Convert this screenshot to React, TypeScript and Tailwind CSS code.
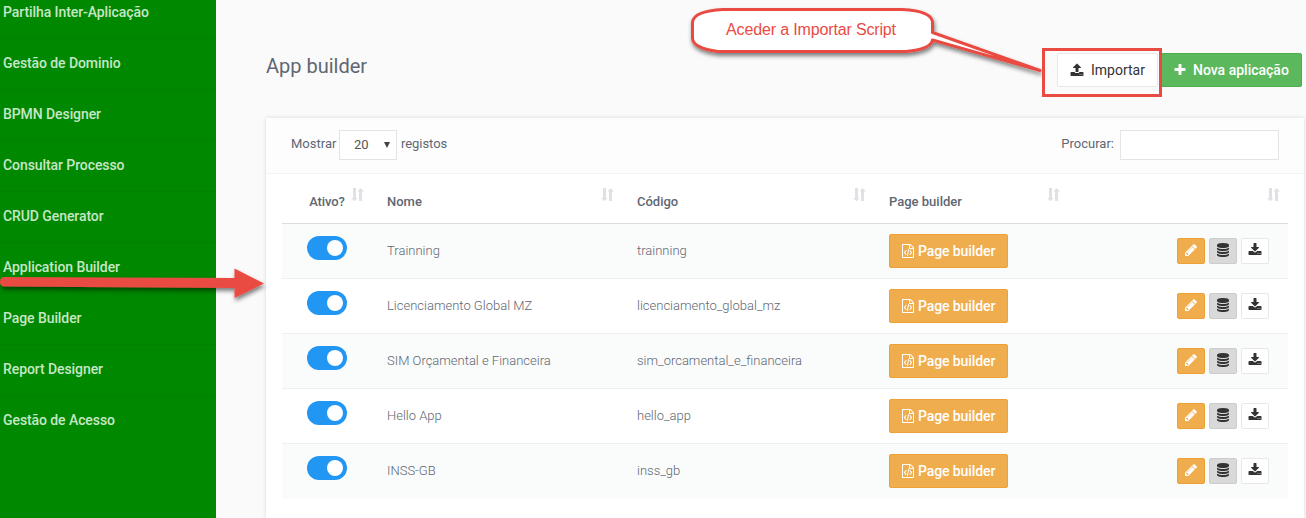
import React from "react";

const ICONS = {
  plus: "M1600 736v192q0 40-28 68t-68 28h-416v416q0 40-28 68t-68 28h-192q-40 0-68-28t-28-68v-416h-416q-40 0-68-28t-28-68v-192q0-40 28-68t68-28h416v-416q0-40 28-68t68-28h192q40 0 68 28t28 68v416h416q40 0 68 28t28 68z",
  pencil:
    "M491 1536l91-91-235-235-91 91v107h128v128h107zm523-928q0-22-22-22-10 0-17 7l-542 542q-7 7-7 17 0 22 22 22 10 0 17-7l542-542q7-7 7-17zm-54-192l416 416-832 832h-416v-416zm683 96q0 53-37 90l-166 166-416-416 166-165q36-38 90-38 53 0 91 38l235 234q37 39 37 91z",
  download:
    "M1344 1344q0-26-19-45t-45-19-45 19-19 45 19 45 45 19 45-19 19-45zm256 0q0-26-19-45t-45-19-45 19-19 45 19 45 45 19 45-19 19-45zm128-224v320q0 40-28 68t-68 28h-1472q-40 0-68-28t-28-68v-320q0-40 28-68t68-28h465l135 136q58 56 136 56t136-56l136-136h464q40 0 68 28t28 68zm-325-569q17 41-14 70l-448 448q-18 19-45 19t-45-19l-448-448q-31-29-14-70 17-39 59-39h256v-448q0-26 19-45t45-19h256q26 0 45 19t19 45v448h256q42 0 59 39z",
  upload:
    "M1344 1472q0-26-19-45t-45-19-45 19-19 45 19 45 45 19 45-19 19-45zm256 0q0-26-19-45t-45-19-45 19-19 45 19 45 45 19 45-19 19-45zm128-224v320q0 40-28 68t-68 28h-1472q-40 0-68-28t-28-68v-320q0-40 28-68t68-28h427q21 56 70.5 92t110.5 36h256q61 0 110.5-36t70.5-92h427q40 0 68 28t28 68zm-325-648q-17 40-59 40h-256v448q0 26-19 45t-45 19h-256q-26 0-45-19t-19-45v-448h-256q-42 0-59-40-17-39 14-69l448-448q18-19 45-19t45 19l448 448q31 30 14 69z",
  database:
    "M896 768q237 0 443-43t325-127v170q0 69-103 128t-280 93.5-385 34.5-385-34.5-280-93.5-103-128v-170q119 84 325 127t443 43zm0 768q237 0 443-43t325-127v170q0 69-103 128t-280 93.5-385 34.5-385-34.5-280-93.5-103-128v-170q119 84 325 127t443 43zm0-384q237 0 443-43t325-127v170q0 69-103 128t-280 93.5-385 34.5-385-34.5-280-93.5-103-128v-170q119 84 325 127t443 43zm0-1152q208 0 385 34.5t280 93.5 103 128v128q0 69-103 128t-280 93.5-385 34.5-385-34.5-280-93.5-103-128v-128q0-69 103-128t280-93.5 385-34.5z",
  fileCode:
    "M1596 380q28 28 48 76t20 88v1152q0 40-28 68t-68 28h-1344q-40 0-68-28t-28-68v-1600q0-40 28-68t68-28h896q40 0 88 20t76 48zm-444-244v376h376q-10-29-22-41l-313-313q-12-12-41-22zm384 1528v-1024h-416q-40 0-68-28t-28-68v-416h-768v1536h1280zm-928-896q8-11 21-12.5t24 6.5l51 38q11 8 12.5 21t-6.5 24l-182 243 182 243q8 11 6.5 24t-12.5 21l-51 38q-11 8-24 6.5t-21-12.5l-226-301q-14-19 0-38zm802 301q14 19 0 38l-226 301q-8 11-21 12.5t-24-6.5l-51-38q-11-8-12.5-21t6.5-24l182-243-182-243q-8-11-6.5-24t12.5-21l51-38q11-8 24-6.5t21 12.5zm-620 461q-13-2-20.5-13t-5.5-24l138-831q2-13 13-20.5t24-5.5l63 10q13 2 20.5 13t5.5 24l-138 831q-2 13-13 20.5t-24 5.5z",
};

function Icon({ name, className = "" }: { name: keyof typeof ICONS; className?: string }) {
  return (
    <svg viewBox="0 0 1792 1792" className={`size-3.5 shrink-0 fill-current ${className}`} aria-hidden="true">
      <path d={ICONS[name]} />
    </svg>
  );
}

function SortIcon() {
  return (
    <svg viewBox="0 0 13 14" className="absolute top-3.5 right-2 h-3.5 w-[13px] fill-[#e0e1e5]" aria-hidden="true">
      <path d="M2 0h3v10h1.500l-3 3.300L0 10h2zM8 13h3v-9.500h2L9.500 0 6.500 3.500H8z" />
    </svg>
  );
}

const menu = [
  "Partilha Inter-Aplicação",
  "Gestão de Dominio",
  "BPMN Designer",
  "Consultar Processo",
  "CRUD Generator",
  "Application Builder",
  "Page Builder",
  "Report Designer",
  "Gestão de Acesso",
];

const rows = [
  ["Trainning", "trainning"],
  ["Licenciamento Global MZ", "licenciamento_global_mz"],
  ["SIM Orçamental e Financeira", "sim_orcamental_e_financeira"],
  ["Hello App", "hello_app"],
  ["INSS-GB", "inss_gb"],
];

const headers = ["Ativo?", "Nome", "Código", "Page builder", ""];

function Sidebar() {
  return (
    <nav className="h-full w-[216px] shrink-0 overflow-hidden bg-[#008800] text-sm leading-[25px] font-medium tracking-[-0.08px] text-[#c6e7c6]">
      {menu.map((item, i) => (
        <div
          key={item}
          className={`border-b pl-[3px] ${i === 0 ? "h-[39px]" : "h-[51px] pt-3"} ${i === menu.length - 1 ? "border-transparent" : "border-[#008200]"}`}
        >
          {item}
        </div>
      ))}
    </nav>
  );
}

function Annotations() {
  return (
    <>
      <svg className="pointer-events-none absolute inset-0 h-[518px] w-[1306px]" aria-hidden="true">
        <defs>
          <filter id="shadow" x="-20%" y="-50%" width="140%" height="220%">
            <feDropShadow dx="1" dy="3" stdDeviation="2" floodColor="#000" floodOpacity="0.5" />
          </filter>
        </defs>
        <path
          d="M4 277L234.500 278V268.500L264 283.500L234.500 298V288L4 286.500Q0 286 0 282Q0 277 4 277Z"
          fill="#e94b43"
          filter="url(#shadow)"
        />
        <path
          d="M723 9.500H902Q932.500 11 932.500 23V32.500L1040 70.500L932.500 40Q931 49 906 51.500H718Q692.500 48 692.500 38V22Q694 11 723 9.500Z"
          fill="#fff"
          stroke="#e94b43"
          strokeWidth="3"
          strokeLinejoin="round"
          filter="url(#shadow)"
        />
        <rect x="1043.500" y="49.500" width="117" height="46" fill="none" stroke="#e94b43" strokeWidth="3" />
      </svg>
      <div className="absolute top-[18px] left-[691px] w-[240px] text-center font-['Liberation_Sans',sans-serif] text-base leading-6 tracking-[-0.15px] text-[#e94b43]">
        Aceder a Importar Script
      </div>
    </>
  );
}

export default function App() {
  return (
    <div className="relative flex h-[518px] w-[1306px] overflow-hidden bg-[#fafafa] font-[Roboto,sans-serif] text-[13px] text-[#5e6773]">
      <Sidebar />
      <main className="flex min-w-0 flex-1 flex-col pl-[50px]">
        <header className="flex h-[118px] shrink-0 items-start justify-between pt-[53px] pr-1">
          <h1 className="pt-px text-xl leading-6">App builder</h1>
          <div className="flex gap-[3px] text-sm">
            <button className="flex h-[34px] w-[101px] items-center gap-[7px] rounded-[2px] border border-[#e8e8e8] bg-white pb-px pl-3 text-[#333]">
              <Icon name="upload" />
              Importar
            </button>
            <button className="flex h-[34px] w-[141px] items-center gap-[6px] rounded-[2px] border border-[#4cae4c] bg-[#5cb85c] pb-px pl-[11px] font-medium text-white">
              <Icon name="plus" />
              Nova aplicação
            </button>
          </div>
        </header>
        <section className="mr-0.5 flex-1 bg-white shadow-[0_0_4px_rgba(0,0,0,0.14)]">
          <div className="flex h-14 items-start justify-between border-b border-[#f3f3f3] bg-[#fdfdfd] pt-3 pr-[25px] pl-[25px]">
            <div className="flex items-start leading-[27px]">
              <span className="w-12">Mostrar</span>
              <div className="flex h-[30px] w-[58px] items-center justify-between border border-[#e4e4e4] bg-white pr-1.5 pb-px pl-[14px] text-[#555]">
                <span>20</span>
                <svg viewBox="0 0 6 6" className="size-1.5 fill-[#444]" aria-hidden="true">
                  <path d="M0 0h6L3 6z" />
                </svg>
              </div>
              <span className="pl-1 tracking-[-0.05px]">registos</span>
            </div>
            <label className="flex gap-1.5 leading-[27px]">
              Procurar:
              <input className="h-[30px] w-[159px] border border-[#e4e4e4] bg-white" />
            </label>
          </div>
          <div className="mx-4">
            <div className="grid h-[50px] grid-cols-[90px_250px_252px_194px_1fr] border-b border-[#d8dedb] font-medium">
              {headers.map((h, i) => (
                <div key={i} className={`relative pt-[18px] leading-5 ${i === 0 ? "text-center tracking-[-0.1px]" : "pl-[15px]"}`}>
                  {h}
                  <SortIcon />
                </div>
              ))}
            </div>
            {rows.map(([name, code], i) => (
              <div
                key={code}
                className={`grid h-[55px] grid-cols-[90px_250px_252px_194px_1fr] font-light ${i % 2 === 0 ? "bg-[#fafcfc]" : "bg-white"} ${i < 4 ? "border-b border-[#edf0f0]" : ""}`}
              >
                <div className="pt-3 pl-[25px]">
                  <div className="flex h-6 w-10 items-center justify-end rounded-full bg-[#2196f3] pr-1">
                    <span className="size-4 rounded-full bg-white" />
                  </div>
                </div>
                <div className="pt-[17px] pl-[15px] leading-5">{name}</div>
                <div className="pt-[17px] pl-[15px] leading-5">{code}</div>
                <div className="pt-2.5 pl-[15px]">
                  <button className="flex h-[34px] w-[119px] items-center gap-[3px] rounded-[2px] border border-[#eea236] bg-[#f0ad4e] pb-px pl-[11px] text-sm font-medium tracking-[-0.1px] text-white">
                    <Icon name="fileCode" />
                    Page builder
                  </button>
                </div>
                <div className="flex justify-end gap-1 pt-3.5 pr-[19px]">
                  <button className="flex h-[26px] w-7 items-center justify-center rounded-[2px] border border-[#eea236] bg-[#f0ad4e] pb-0.5 text-white">
                    <Icon name="pencil" />
                  </button>
                  <button className="flex h-[26px] w-7 items-center justify-center rounded-[2px] border border-[#ccc] bg-[#d9d9d9] pb-0.5 text-[#333]">
                    <Icon name="database" />
                  </button>
                  <button className="flex h-[26px] w-7 items-center justify-center rounded-[2px] border border-[#e8e8e8] bg-white pb-0.5 text-[#333]">
                    <Icon name="download" />
                  </button>
                </div>
              </div>
            ))}
          </div>
        </section>
      </main>
      <Annotations />
    </div>
  );
}
